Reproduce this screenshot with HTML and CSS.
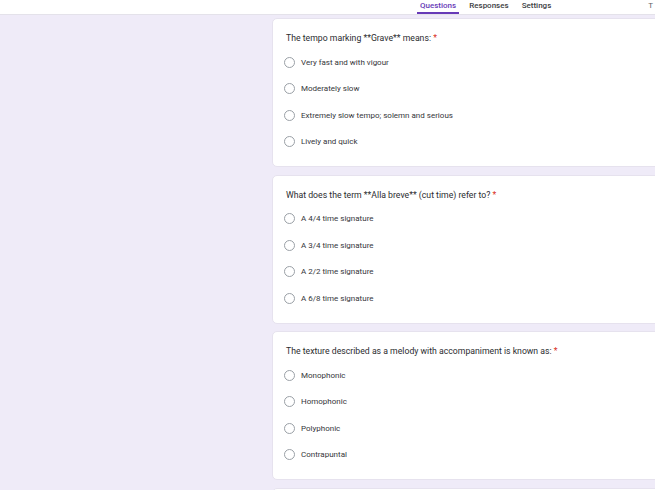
FILE: index.html
```html
<!DOCTYPE html>
<html lang="en">
<head>
    <meta charset="UTF-8">
    <title>Music Theory Quiz - Questions</title>
    <link rel="stylesheet" href="styles.css">
</head>
<body>
    <header class="topbar">
        <nav class="tabs">
            <a href="#" class="tab active">Questions</a>
            <a href="#" class="tab">Responses</a>
            <a href="#" class="tab">Settings</a>
        </nav>
        <div class="total">T</div>
    </header>

    <main class="form">
        <div class="card">
            <div class="question">The tempo marking **Grave** means: <span class="req">*</span></div>
            <label class="option"><span class="radio"></span>Very fast and with vigour</label>
            <label class="option"><span class="radio"></span>Moderately slow</label>
            <label class="option"><span class="radio"></span>Extremely slow tempo; solemn and serious</label>
            <label class="option"><span class="radio"></span>Lively and quick</label>
        </div>

        <div class="card">
            <div class="question">What does the term **Alla breve** (cut time) refer to? <span class="req">*</span></div>
            <label class="option"><span class="radio"></span>A 4/4 time signature</label>
            <label class="option"><span class="radio"></span>A 3/4 time signature</label>
            <label class="option"><span class="radio"></span>A 2/2 time signature</label>
            <label class="option"><span class="radio"></span>A 6/8 time signature</label>
        </div>

        <div class="card">
            <div class="question">The texture described as a melody with accompaniment is known as: <span class="req">*</span></div>
            <label class="option"><span class="radio"></span>Monophonic</label>
            <label class="option"><span class="radio"></span>Homophonic</label>
            <label class="option"><span class="radio"></span>Polyphonic</label>
            <label class="option"><span class="radio"></span>Contrapuntal</label>
        </div>

        <!-- next question card, only its top edge is in view -->
        <div class="card"></div>
    </main>
</body>
</html>
```

FILE: styles.css
```css
html, body {
    margin: 0;
    padding: 0;
    height: 100%;
    overflow: hidden;
}
body {
    font-family: Roboto, 'Liberation Sans', sans-serif;
    background: #efebf8;
    color: #202124;
}
.topbar {
    height: 14px;
    background: white;
    border-bottom: 1px solid #e4e2ea;
    display: flex;
    align-items: stretch;
    white-space: nowrap;
}
.tabs {
    display: flex;
    gap: 7px;
    padding-left: 417px;
}
.tab {
    font-size: 8px;
    font-weight: 500;
    color: #3c4043;
    text-decoration: none;
    padding: 0 3px;
    line-height: 11px;
    border-bottom: 2px solid transparent;
}
.tab.active {
    color: #673ab7;
    border-bottom-color: #673ab7;
}
.total {
    margin-left: 94px;
    font-size: 8px;
    color: #5f6368;
    line-height: 11px;
}
.form {
    padding: 3px 0 0 272px;
    display: flex;
    flex-direction: column;
    gap: 7.5px;
}
.card {
    width: 410px;
    height: 149px;
    background: white;
    border-radius: 5px;
    border: 1px solid #e6e2ee;
    padding: 12px 12px;
    box-sizing: border-box;
    flex-shrink: 0;
}
.question {
    font-size: 8.7px;
    line-height: 14px;
    padding-left: 1px;
    margin-bottom: 4px;
    color: #2b2c2f;
}
.req {
    color: #d93025;
}
.option {
    display: flex;
    align-items: center;
    height: 26.5px;
    font-size: 8px;
    color: #35363a;
}
.radio {
    width: 9px;
    height: 9px;
    border: 1px solid #9aa0a6;
    border-radius: 50%;
    margin-right: 6px;
    margin-left: -1px;
    flex-shrink: 0;
}
```
